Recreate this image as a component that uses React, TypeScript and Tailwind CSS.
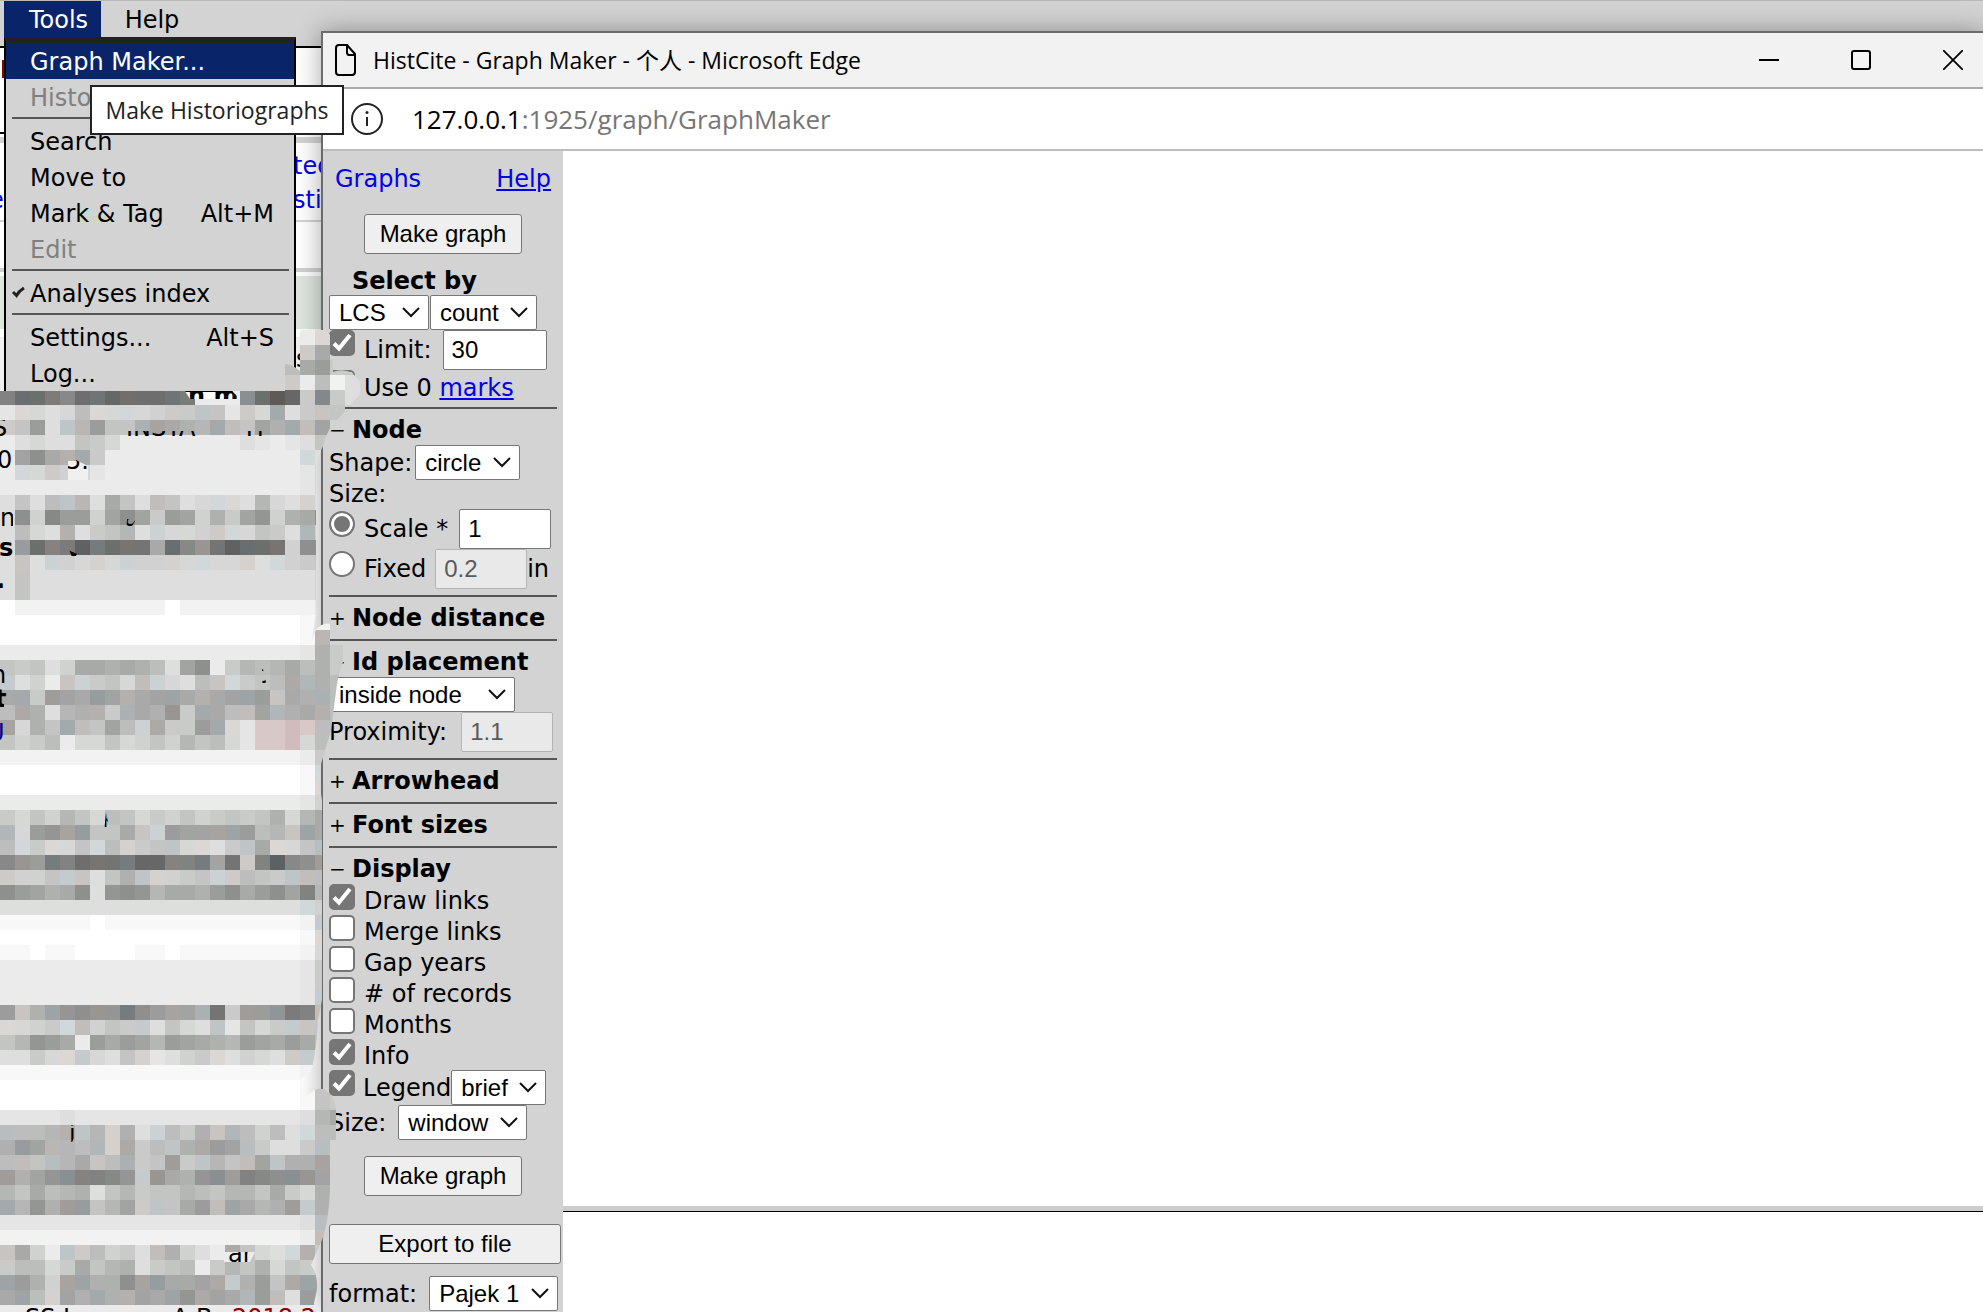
import { useId, type ReactNode } from 'react';

const CELL = 15;
const MOSAIC_TOP = 315;

// One letter per cell, "a" is the darkest grey and "z" is white.
const MOSAIC = [
  '                      ',
  '                    wt',
  '                    rm',
  '                   pmkrr',
  '                   rwpxu',
  'gddfhdecdddefwwwidacrhru',
  'vttutpttttsrrqqvrtmurqq',
  'rqkuqokqqnlmnompqlnmpl',
  'wutuuqrtwwwwwwwwuvwvuq',
  'wlimnmrwwwwwwwwwwwwwtu',
  'wttrstvwwwwwwwwwwwwwvt',
  'wwwwwwwwwwwwwwwwwwwwvt',
  'uqupqoumqupqutttuotusu',
  'uishkkslilrklsnrljsnmi',
  'uptunurqousttsrttqruos',
  'ukdgfbfdeemdhjebddesii',
  'uqusststssssttttsutsrq',
  'uquuuuuuuuuuuuuuuuuuus',
  'uquuuuuuuuuuuuuuuuuuus',
  'zxxxxxxxxxxzxxxxxxxxxv',
  'zzzzzzzzzzzzzzzzzzzzyx',
  'zzzzzzzzzzzzzzzzzzzzyo',
  'wwwwwwwwwwwwwwwwwwwwvnr',
  'qrqusmmnmnpuliwropompnr',
  'ruswqsrqtpstupqtrqpmonp',
  'mmrklmklnmllmnmllkqmnnp',
  'pmnuonnrnmnjrmmpplonmnp',
  'ltnqmpqlpsmrrkmtvPPQPpp',
  'qsrpwttqtsqsoqptvPPQtpp',
  'xxxxxxxxxxxxxxxxxxxxwr',
  'zzzzzzzzzzzzzzzzzzzzyt',
  'zzzzzzzzzzzzzzzzzzzzyt',
  'wwwwwwwwwwwwwwwwwwwwvs',
  'rtqsoqtpqtrsqsrqrqntom',
  'otkjlkqqmqskllllkpoqlm',
  'ptrttqtpsrqqtturqmttqp',
  'hjkfgdeefccggflergbhik',
  'rssqrquqnqssrqsrpqrqpp',
  'iklnmiujijommnkimkilgo',
  'uuuuuuuuuuuuuuuuuuuuts',
  'yyyyyyzyyyyyyyyyyyyyxr',
  'zzzzzzzzzzzzzzzzzzzzyt',
  'yyzyyzzzzyyzyyyyyyyyxt',
  'wwwwwwwwwwwwwwwwwwwwvr',
  'wwwwwwwwwwwwwwwwwwwwvr',
  'wwwwwwwwwwwwwwwwwwwwvr',
  'kqnljijjfikllnerkkjfgp',
  'ttsrtpsqrruqtuqvqtrrqq',
  'qojkmwkmkloklmnoklmkmp',
  'uurttrtuqsvusrtusturru',
  'yyyyyyyyyyyyyyyyyyyyxu',
  'zzzzzzzzzzzzzzzzzzzzyq',
  'zzzzzzzzzzzzzzzzzzzzyqr',
  'vvvvuvvvvvvvvvvvvvvvuom',
  'ppponqoSnusprnqopsputpp',
  'nkloopoSmrpqnmklpruurp',
  'ppqpomqpnrqkrqoqplqnnl',
  'knljigghjrjmnjikghiijl',
  'oqmponuqorqqopqooqmrtn',
  'mojnkkqolrqqmkplmonkrn',
  'vvvvvvvvvvvvvvvvvvvvup',
  'xxxxxxxxxxxxxxxxxxxxwp',
  'qmswqrpsrupnsuwmqtutnr',
  'rpptrmqonurqpwroqntqrn',
  'lknsllnnilkmmlmrnkqmll',
  'mlpslnmnnlmljmlmokpukl',
  'wwwwwwwwwwwwwwwwwwwwwu',
];

const TINTS: Record<string, string> = { P: '#d8c8c8', Q: '#d0bcbc', S: '#d6d0cc' };

// Red, green and blue shifts that keep the dark cells from being pure grey.
const CASTS = [
  [0, 0, 0],
  [4, 0, -3],
  [-5, 0, 3],
  [0, 0, 0],
  [-1, 1, -2],
];

function cellColor(ch: string, x: number, y: number) {
  if (TINTS[ch]) return TINTS[ch];
  const level = Math.round(90 + (ch.charCodeAt(0) - 97) * 6.6);
  if (ch > 't') return `rgb(${level} ${level} ${level})`;
  const [r, g, b] = CASTS[(x * 7 + y * 3 + x * y) % CASTS.length];
  return `rgb(${level + r} ${level + g} ${level + b})`;
}

function Mosaic() {
  return (
    <svg
      className="pointer-events-none absolute left-0 top-0 z-20"
      width="375"
      height="1312"
      viewBox="0 0 375 1312"
      aria-hidden="true"
    >
      <clipPath id="smear">
        <path d="M0 391H285V364Q292 364 300 371V332Q306 324 318 325Q331 330 333 345V372Q343 368 352 373Q364 383 362 392L339 418Q328 426 323 446Q317 458 316 470V613L312 640L316 630Q322 622 332 624Q342 629 343 645V662Q339 672 337 684L331 730L323 757L318 775L322 800V1000L318 1020Q316 1060 310 1072Q303 1076 300 1080L305 1097L315 1090Q322 1086 330 1094Q336 1100 336 1110V1140H330V1190Q329 1220 322 1240L311 1265Q318 1275 317 1290L314 1303L316 1312H0Z" />
      </clipPath>
      <g clipPath="url(#smear)" shapeRendering="crispEdges">
        {MOSAIC.map((row, y) =>
          row.split('').map((ch, x) =>
            ch === ' ' ? null : (
              <rect
                key={`${x}-${y}`}
                x={x * CELL}
                y={MOSAIC_TOP + y * CELL}
                width={CELL}
                height={CELL}
                fill={cellColor(ch, x, y)}
              />
            ),
          ),
        )}
      </g>

      {/* scraps of page text that show through */}
      <clipPath id="scraps">
        <path d="M185 391H232L240 399H190ZM120 431H265V436H120ZM0 420H7L13 440V700H0ZM68 461L76 460L88 466V480H68ZM127 519L135 521L126 537ZM68 550L77 554L74 566ZM262 665L269 695L263 705ZM0 690H4V745H0ZM106 812L109 827L103 843ZM152 1008H170V1013H152ZM69 1124L80 1128L72 1142H69ZM224 1252H255L250 1262H224ZM0 1308H320V1312H0ZM33 1296H50V1300H33Z" />
      </clipPath>
      <g clipPath="url(#scraps)" className="font-['Verdana','DejaVu_Sans',sans-serif] text-[24px]">
        <rect x="185" y="390" width="55" height="9" fill="#fff" />
        <rect x="185" y="390" width="50" height="2" fill="#000" />
        <rect x="224" y="1250" width="32" height="14" fill="#ececec" />
        <rect x="68" y="461" width="20" height="20" fill="#f0f0f0" />
        <text x="188" y="404" fontWeight="bold">n m</text>
        <text x="126" y="436">INSTA</text>
        <text x="242" y="436">TI</text>
        <text x="-8" y="436">S</text>
        <text x="-3" y="468">0</text>
        <text x="66" y="469">5.</text>
        <text x="0" y="526">n</text>
        <text x="124" y="526">a</text>
        <text x="-1" y="556" fontWeight="bold">s</text>
        <text x="66" y="556" fontWeight="bold">v</text>
        <text x="-4" y="588" fontWeight="bold">.</text>
        <text x="-9" y="683">n</text>
        <text x="255" y="683">b</text>
        <text x="-5" y="707" fontWeight="bold">t</text>
        <text x="-13" y="741" fill="#00008b">U</text>
        <text x="102" y="827">k</text>
        <text x="151" y="1027">a</text>
        <text x="69" y="1142">i</text>
        <text x="228" y="1262">ar</text>
        <text x="25" y="1326">SS L</text>
        <text x="172" y="1326">A B</text>
        <text x="232" y="1326" fill="#8b0000">2018 2</text>
      </g>
    </svg>
  );
}

function MenuItem({
  children,
  shortcut,
  active,
  disabled,
  checked,
}: {
  children: ReactNode;
  shortcut?: string;
  active?: boolean;
  disabled?: boolean;
  checked?: boolean;
}) {
  return (
    <button
      type="button"
      role="menuitem"
      disabled={disabled}
      className={`relative flex h-9 w-full items-end justify-between pb-[3px] pl-6 pr-5 text-left ${
        active ? 'bg-[#0a246a] text-white' : disabled ? 'text-[#808080]' : 'text-black'
      }`}
    >
      {checked && (
        <svg className="absolute left-[6px] top-3" width="13" height="11" viewBox="0 0 13 11" aria-hidden="true">
          <path d="M1 5L4.500 8.500Q7 4 12 1" fill="none" stroke="#222" strokeWidth="3" />
        </svg>
      )}
      <span>{children}</span>
      {shortcut && <span>{shortcut}</span>}
    </button>
  );
}

function MenuRule() {
  return <div role="separator" className="mb-1 ml-1.5 mr-[5px] mt-0.5 h-0.5 bg-[#555]" />;
}

function ToolsMenu() {
  return (
    <div
      role="menu"
      className="absolute left-1 top-[37px] z-10 w-[292px] border-x-2 border-t-[6px] border-x-black border-t-[#222] bg-[#d3d3d3]"
    >
      <MenuItem active>Graph Maker...</MenuItem>
      <MenuItem disabled>Histo</MenuItem>
      <MenuRule />
      <MenuItem>Search</MenuItem>
      <MenuItem>Move to</MenuItem>
      <MenuItem shortcut="Alt+M">Mark &amp; Tag</MenuItem>
      <MenuItem disabled>Edit</MenuItem>
      <MenuRule />
      <MenuItem checked>Analyses index</MenuItem>
      <MenuRule />
      <MenuItem shortcut="Alt+S">Settings...</MenuItem>
      <MenuItem>Log...</MenuItem>
    </div>
  );
}

function Select({ label, value, width }: { label: string; value: string; width: string }) {
  return (
    <div className={`relative h-[35px] shrink-0 ${width}`}>
      <select
        aria-label={label}
        defaultValue={value}
        className="h-full w-full appearance-none rounded-[2px] border border-[#767676] bg-white pl-[9px] font-['Arial','Liberation_Sans',sans-serif] text-[24px] leading-7"
      >
        <option>{value}</option>
      </select>
      <svg
        className="pointer-events-none absolute right-[9px] top-3"
        width="18"
        height="11"
        viewBox="0 0 18 11"
        aria-hidden="true"
      >
        <path d="M1 1L9 9L17 1" fill="none" stroke="#111" strokeWidth="2" />
      </svg>
    </div>
  );
}

function NumberBox({
  id,
  label,
  value,
  width,
  disabled,
}: {
  id?: string;
  label: string;
  value: string;
  width: string;
  disabled?: boolean;
}) {
  return (
    <input
      id={id}
      type="text"
      aria-label={label}
      defaultValue={value}
      disabled={disabled}
      className={`h-10 shrink-0 rounded-[2px] border border-[#767676] bg-white px-2 font-['Arial','Liberation_Sans',sans-serif] text-[24px] disabled:border-[#b4b4b4] disabled:bg-[#e9e9e9] disabled:text-[#5a5a5a] ${width}`}
    />
  );
}

function Check({ id, checked }: { id: string; checked?: boolean }) {
  return (
    <span className="relative size-[26px] shrink-0 self-start">
      <input
        id={id}
        type="checkbox"
        defaultChecked={checked}
        className="peer block size-full appearance-none rounded-[5px] border-2 border-[#767676] bg-white checked:bg-[#767676]"
      />
      <svg
        className="pointer-events-none absolute left-0 top-0 hidden peer-checked:block"
        width="26"
        height="26"
        viewBox="0 0 26 26"
        aria-hidden="true"
      >
        <path d="M5 13.500L10 18.500L21 5" fill="none" stroke="#fff" strokeWidth="4" />
      </svg>
    </span>
  );
}

function Radio({ id, checked }: { id: string; checked?: boolean }) {
  return (
    <input
      id={id}
      type="radio"
      name="node-size"
      defaultChecked={checked}
      className="mt-0.5 size-[26px] shrink-0 appearance-none self-start rounded-full border-2 border-[#767676] bg-white checked:bg-[#767676] checked:shadow-[inset_0_0_0_3px_#fff]"
    />
  );
}

function CheckRow({ label, checked }: { label: string; checked?: boolean }) {
  const id = useId();
  return (
    <div className="flex h-[31px] items-end gap-[9px]">
      <Check id={id} checked={checked} />
      <label htmlFor={id}>{label}</label>
    </div>
  );
}

function Section({ title, open, children }: { title: string; open?: boolean; children?: ReactNode }) {
  return (
    <section className="mr-1.5 border-t-2 border-[#555] pb-1.5">
      <h2 className="flex h-9 items-end pb-px">
        <span className="w-[23px] text-[20px]">{open ? '−' : '+'}</span>
        <span className="whitespace-nowrap font-bold">{title}</span>
      </h2>
      {children}
    </section>
  );
}

function PushButton({ children, className }: { children: ReactNode; className: string }) {
  return (
    <button
      type="button"
      className={`h-10 shrink-0 rounded-[3px] border border-[#767676] bg-[#efefef] font-['Arial','Liberation_Sans',sans-serif] text-[24px] ${className}`}
    >
      {children}
    </button>
  );
}

function Sidebar() {
  return (
    <aside className="flex w-60 shrink-0 flex-col bg-[#d3d3d3] pl-1.5 leading-7">
      <div className="flex h-[55px] items-center justify-between pl-1.5 pr-3 text-[#0000ee]">
        <span>Graphs</span>
        <a href="#help" className="underline">
          Help
        </a>
      </div>
      <PushButton className="ml-[35px] mt-2 w-[158px]">Make graph</PushButton>

      <h2 className="ml-[23px] mt-[13px] font-bold">Select by</h2>
      <div className="flex gap-px">
        <Select label="Score" value="LCS" width="w-[100px]" />
        <Select label="Criterion" value="count" width="w-[107px]" />
      </div>
      <div className="flex h-10 items-center gap-[9px]">
        <Check id="limit" checked />
        <label htmlFor="limit" className="mr-0.5">
          Limit:
        </label>
        <NumberBox label="Limit value" value="30" width="w-[104px]" />
      </div>
      <div className="flex h-[37px] items-center gap-[9px] pb-0.5">
        <Check id="use-marks" />
        <div>
          <label htmlFor="use-marks">Use 0 </label>
          <a href="#marks" className="text-[#0000ee] underline">
            marks
          </a>
        </div>
      </div>

      <Section title="Node" open>
        <div className="flex h-[35px] items-center gap-[3px]">
          <span>Shape:</span>
          <Select label="Shape" value="circle" width="w-[105px]" />
        </div>
        <div className="h-[29px]">Size:</div>
        <div className="flex h-10 items-center gap-[9px]">
          <Radio id="scale" checked />
          <label htmlFor="scale" className="mr-0.5 whitespace-nowrap">
            Scale *
          </label>
          <NumberBox label="Scale factor" value="1" width="w-[92px]" />
        </div>
        <div className="flex h-10 items-center">
          <Radio id="fixed" />
          <label htmlFor="fixed" className="mx-[9px]">
            Fixed
          </label>
          <NumberBox label="Fixed size" value="0.2" width="w-[92px]" disabled />
          <span>in</span>
        </div>
      </Section>
      <Section title="Node distance" />
      <Section title="Id placement" open>
        <Select label="Id placement" value="inside node" width="w-[186px]" />
        <div className="flex h-10 items-center gap-3.5">
          <label htmlFor="proximity">Proximity:</label>
          <NumberBox id="proximity" label="Proximity" value="1.1" width="w-[92px]" disabled />
        </div>
      </Section>
      <Section title="Arrowhead" />
      <Section title="Font sizes" />
      <Section title="Display" open>
        <CheckRow label="Draw links" checked />
        <CheckRow label="Merge links" />
        <CheckRow label="Gap years" />
        <CheckRow label="# of records" />
        <CheckRow label="Months" />
        <CheckRow label="Info" checked />
        <div className="flex h-[35px] items-center">
          <Check id="legend" checked />
          <label htmlFor="legend" className="ml-2">
            Legend
          </label>
          <Select label="Legend style" value="brief" width="w-[95px]" />
        </div>
        <div className="flex h-[35px] items-center gap-3">
          <span>Size:</span>
          <Select label="Graph size" value="window" width="w-[129px]" />
        </div>
      </Section>

      <PushButton className="ml-[35px] mt-2.5 w-[158px]">Make graph</PushButton>
      <PushButton className="mr-0.5 mt-7">Export to file</PushButton>
      <div className="mt-3 flex h-[35px] items-center gap-3">
        <span>format:</span>
        <Select label="Format" value="Pajek 1" width="w-[129px]" />
      </div>
    </aside>
  );
}

function TitleBar() {
  return (
    <div className="flex h-14 shrink-0 items-center border-b-2 border-[#a9a9a9] bg-[#f2f2f2] pl-3">
      <svg width="22" height="34" viewBox="0 0 22 34" fill="none" stroke="#000" strokeWidth="2" aria-hidden="true">
        <path d="M4 2H12L20 11V29Q20 32 17 32H4Q1 32 1 29V5Q1 2 4 2ZM12 2V9Q12 12 14 12H20" />
      </svg>
      <h1 className="ml-4 grow text-[23px]">HistCite - Graph Maker - 个人 - Microsoft Edge</h1>
      <div className="mr-5 flex gap-[72px]">
        <button type="button" aria-label="Minimize">
          <svg width="20" height="20" viewBox="0 0 20 20" stroke="#000" strokeWidth="2">
            <path d="M0 10H20" />
          </svg>
        </button>
        <button type="button" aria-label="Maximize">
          <svg width="20" height="20" viewBox="0 0 20 20" fill="none" stroke="#000" strokeWidth="2">
            <rect x="1" y="1" width="18" height="18" rx="2" />
          </svg>
        </button>
        <button type="button" aria-label="Close">
          <svg width="20" height="20" viewBox="0 0 20 20" stroke="#000" strokeWidth="1.800">
            <path d="M0 0L20 20M20 0L0 20" />
          </svg>
        </button>
      </div>
    </div>
  );
}

function AddressBar() {
  return (
    <div className="flex h-[62px] shrink-0 items-center border-b-2 border-[#bdbdbd] bg-white pl-7">
      <svg width="32" height="32" viewBox="0 0 32 32" fill="none" stroke="#222" strokeWidth="2" aria-hidden="true">
        <circle cx="16" cy="16" r="15" />
        <path d="M16 14V23" />
        <circle cx="16" cy="9.500" r="1.500" fill="#222" stroke="none" />
      </svg>
      <p className="ml-[29px] text-[26px] text-[#767676]">
        <span className="text-black">127.0.0.1</span>:1925/graph/GraphMaker
      </p>
    </div>
  );
}

function GraphWindow() {
  return (
    <div className="absolute inset-y-0 left-[321px] right-0 mt-[31px] flex flex-col border-l-2 border-t-2 border-[#6b6b6b] bg-white shadow-[0_0_24px_rgba(0,0,0,0.35)]">
      <div className="font-['Segoe_UI','Open_Sans','Noto_Sans_CJK_SC',sans-serif]">
        <TitleBar />
        <AddressBar />
      </div>
      <div className="flex min-h-0 grow">
        <Sidebar />
        <main className="flex grow flex-col">
          <div className="grow" />
          <div className="h-[101px] border-t border-black bg-white shadow-[0_-5px_0_#cdcdcd]" />
        </main>
      </div>
    </div>
  );
}

function PageBehind() {
  return (
    <div className="w-full text-[#0000ee]">
      <div className="h-[89px]">
        <div className="flex h-[86px] w-2 flex-col border-b-2 border-black pt-3">
          <div className="ml-0.5 h-[18px] w-0.5 bg-[#8b0000]" />
        </div>
      </div>
      <div className="h-1.5 bg-[#d3d3d3]" />
      <div className="h-[79px] border-b-2 border-[#d3d3d3] pt-1.5 leading-[34px]">
        <div className="pl-[293px]">ted</div>
        <div className="flex">
          <span className="-ml-[11px] w-[304px]">e</span>
          <span>stit</span>
        </div>
      </div>
      <div className="h-[50px] border-b-4 border-[#d0d0d0]" />
      <div className="mt-1 h-[53px] bg-[#dfe6df]" />
      <div className="mt-2 h-[54px] bg-[#f0f0f0] pl-[296px] pt-2 leading-7 text-black">s</div>
    </div>
  );
}

export default function App() {
  return (
    <div className="relative min-h-screen overflow-hidden bg-white font-['Verdana','DejaVu_Sans',sans-serif] text-[24px] leading-7 text-black">
      <nav className="flex h-12 items-start border-b-2 border-t border-b-black border-t-[#b8b8b8] bg-[#d3d3d3] pl-1">
        <button type="button" className="h-9 w-[97px] bg-[#0a246a] pl-3 pt-0.5 text-white">
          Tools
        </button>
        <button type="button" className="h-9 w-[102px] pt-0.5">
          Help
        </button>
      </nav>
      <PageBehind />
      <GraphWindow />
      <ToolsMenu />
      <Mosaic />
      <div
        role="tooltip"
        className="absolute left-[90px] top-[85px] z-30 flex h-[50px] w-[254px] items-center justify-center whitespace-nowrap border-2 border-[#222] bg-white font-['Segoe_UI','Open_Sans',sans-serif] text-[23px] text-[#222]"
      >
        Make Historiographs
      </div>
    </div>
  );
}
